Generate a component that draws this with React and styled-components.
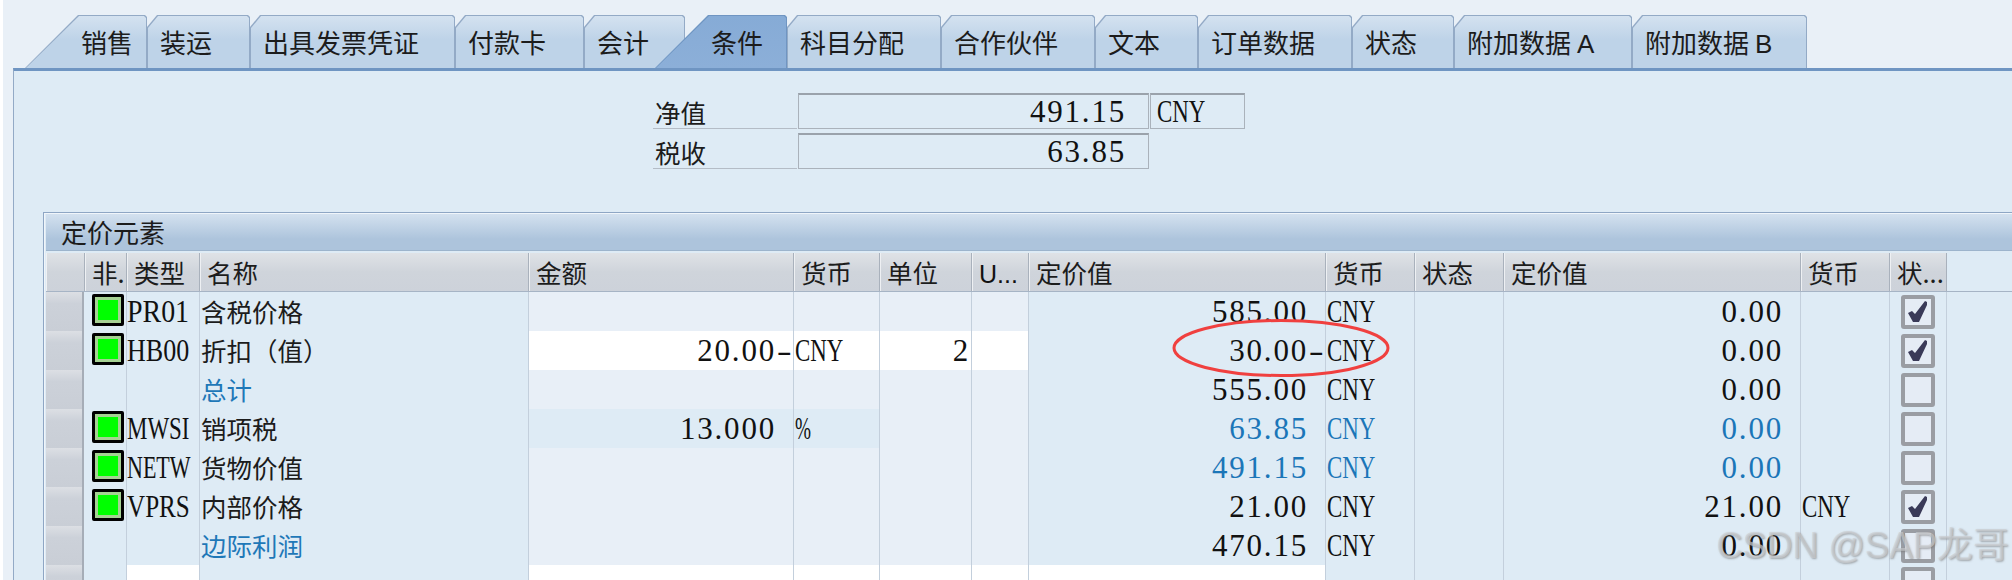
import styled, {createGlobalStyle} from "styled-components";

const GlobalStyle = createGlobalStyle`
  html, body {
    margin: 0;
    padding: 0;
    background: #fff;
  }
`

const CJK = `"Noto Sans CJK SC", "Liberation Sans", sans-serif`;

const Page = styled.div`
  position: relative;
  width: 2012px;
  height: 580px;
  overflow: hidden;
  padding-left: 3px;
  box-sizing: border-box;
  font-family: ${CJK};
  font-size: 25.5px;
  color: #1c1c1c;
`

const Sheet = styled.div`
  height: 100%;
  display: flex;
  flex-direction: column;
  background: #e9f0f7;
`

const TabStrip = styled.div`
  display: flex;
  height: 53px;
  margin-top: 15px;
  padding-left: 22px;
  flex: none;
`

const Tab = styled.div`
  position: relative;
  width: ${(p) => p.$w}px;
  margin-left: ${(p) => p.$overlap || 0}px;
  z-index: ${(p) => (p.$active ? 2 : 1)};
  display: flex;
  align-items: center;
  padding: 0 0 1px ${(p) => (p.$slant ? 56 : 13)}px;
  box-sizing: border-box;
  font-size: 26px;
  white-space: nowrap;
  background: ${(p) => (p.$active ? "#6f95c2" : "#93aac6")};
  clip-path: ${(p) => p.$slant
    ? "polygon(0 100%, 53px 0, calc(100% - 2px) 0, 100% 2px, 100% 100%)"
    : "polygon(0 12px, 10px 0, calc(100% - 2px) 0, 100% 2px, 100% 100%, 0 100%)"};

  &::before {
    content: "";
    position: absolute;
    inset: 1px 1px 0 1px;
    background: ${(p) => p.$active
      ? "linear-gradient(#86abd6, #8cafd8)"
      : "linear-gradient(#d4e2f0 0%, #bed3e8 45%, #bed3e8 100%)"};
    clip-path: inherit;
  }
`

const TabLabel = styled.span`
  position: relative;
  z-index: 1;
`

const TabLatin = styled.span`
  font-family: "Liberation Sans", sans-serif;
  margin-left: 6px;
`

const Panel = styled.div`
  flex: 1;
  margin-left: 10px;
  background: #deebf5;
  border-top: 3px solid #6f95c2;
  border-left: 1px solid #93aac6;
  padding-top: 22px;
`

const Summary = styled.div`
  display: flex;
  flex-direction: column;
  gap: 4px;
  margin-left: 639px;
`

const SummaryRow = styled.div`
  display: flex;
  gap: 1px;
  height: 36px;
`

const SummaryLabel = styled.div`
  width: 144px;
  box-sizing: border-box;
  border-bottom: 1px solid #b4bcc6;
  padding-left: 2px;
  line-height: 38px;
`

const SummaryBox = styled.div`
  width: ${(p) => p.$w}px;
  box-sizing: border-box;
  display: flex;
  align-items: center;
  justify-content: ${(p) => (p.$left ? "flex-start" : "flex-end")};
  padding: ${(p) => (p.$left ? "0 0 0 6px" : "0 22px 0 0")};
  border: 1px solid #aab2bb;
  border-top: 2px solid #9aa2ab;
`

const Group = styled.div`
  margin: 43px 0 0 29px;
  padding: 1px 0 0 2px;
  border-top: 1px solid #8ea6c4;
  border-left: 1px solid #8ea6c4;
  box-shadow: inset 1px 1px 0 #f0f5fa;
`

const GroupTitle = styled.div`
  height: 37px;
  padding-left: 15px;
  line-height: 36px;
  font-size: 26px;
  background: linear-gradient(#d3e1ef, #adc4dc 70%, #adc4dc);
  border-bottom: 1px solid #9db4cc;
  box-sizing: border-box;
`

const columns = "39px 42px 73px 329px 265px 86px 92px 57px 297px 89px 89px 297px 89px 57px";

const HeadRow = styled.div`
  display: grid;
  grid-template-columns: ${columns};
  height: 39px;
  margin-top: 2px;
  border-bottom: 1px solid #a6b4c5;
  box-sizing: border-box;
`

const HeadCell = styled.div`
  padding-left: 7px;
  line-height: 37px;
  white-space: nowrap;
  overflow: hidden;
  background: linear-gradient(#dfe2e6, #cfd4db 50%, #cdd2da);
  border-right: 1px solid #a9b1bc;
  box-shadow: inset 1px 0 0 #eef0f3;
`

const HeadLatin = styled.span`
  font-family: "Liberation Sans", sans-serif;
  font-size: 25px;
  color: #111;
`

const Row = styled.div`
  display: grid;
  grid-template-columns: ${columns};
  height: 39px;
`

const Selector = styled.div`
  background: linear-gradient(#dcdfe4, #ccd1d9 30%, #c9ced6);
  border-right: 2px solid #a6adb7;
  border-bottom: 1px solid #aab1bb;
  margin-right: 1px;
  box-sizing: border-box;
`

const tones = {
  base: "#deebf5",
  light: "#e8eff7",
  white: "#ffffff",
};

const Cell = styled.div`
  background: ${(p) => tones[p.$tone || "base"]};
  border-right: 1px solid #c3cfdc;
  border-bottom: 1px solid #b8c5d6;
  box-sizing: border-box;
  display: flex;
  align-items: center;
  justify-content: ${(p) => (p.$right ? "flex-end" : "flex-start")};
  padding: ${(p) => p.$pad || "0 0 0 1px"};
  white-space: nowrap;
  color: ${(p) => (p.$link ? "#1f78b8" : "#1c1c1c")};
`

const Num = styled.span`
  font-family: "Liberation Serif", serif;
  font-size: 31px;
  letter-spacing: 1.8px;
  color: ${(p) => (p.$blue ? "#1b76b8" : "#111")};
`

const Sign = styled.span`
  display: inline-block;
  width: 10px;
  margin: 0 3px;
  letter-spacing: 0;
  text-align: center;
  transform: scaleX(1.45);
`

const Latin = styled.span`
  display: inline-block;
  font-family: "Liberation Serif", serif;
  font-size: 31px;
  transform: scaleX(${(p) => p.$sx});
  transform-origin: left center;
  color: ${(p) => (p.$blue ? "#1b76b8" : "#111")};
`

const Lamp = styled.div`
  width: 32px;
  height: 32px;
  margin: -3px 0 0 7px;
  box-sizing: border-box;
  border: 3px solid #000;
  border-radius: 2px;
  background: #00ff00;
  box-shadow: inset 0 0 0 3px #a6d294;
`

const Check = styled.div`
  width: 34px;
  height: 34px;
  margin-left: 11px;
  box-sizing: border-box;
  border: 4px solid #9a9da3;
  border-radius: 3px;
  background: #e5ecf5;
  display: flex;
  align-items: center;
  justify-content: center;
`

const Ellipse = styled.svg`
  position: absolute;
  left: 1172px;
  top: 318px;
`

const Watermark = styled.div`
  position: absolute;
  right: 3px;
  top: 516px;
  font-family: "Liberation Sans", "Noto Sans CJK SC", sans-serif;
  font-size: 36px;
  white-space: nowrap;
  color: rgba(205, 207, 210, 0.65);
  text-shadow: 1px 1px 2px rgba(110, 110, 110, 0.55);
`

const tabs = [
  {label: "销售", w: 122, slant: true},
  {label: "装运", w: 103},
  {label: "出具发票凭证", w: 205},
  {label: "付款卡", w: 129},
  {label: "会计", w: 101},
  {label: "条件", w: 132, slant: true, active: true, overlap: -30},
  {label: "科目分配", w: 154},
  {label: "合作伙伴", w: 154},
  {label: "文本", w: 103},
  {label: "订单数据", w: 154},
  {label: "状态", w: 102},
  {label: "附加数据", latin: "A", w: 178},
  {label: "附加数据", latin: "B", w: 175},
];

const heads = ["", "非.", "类型", "名称", "金额", "货币", "单位", "U...", "定价值", "货币", "状态", "定价值", "货币", "状..."];

const rows = [
  {code: "PR01", sx: 0.9, name: "含税价格", value: "585.00", cur: true, value2: "0.00", checked: true},
  {code: "HB00", sx: 0.84, name: "折扣（值）", amount: "20.00", amountSign: "-", amountCur: "CNY", unit: "2", input: "white", value: "30.00", sign: "-", cur: true, value2: "0.00", checked: true},
  {name: "总计", link: true, value: "555.00", cur: true, value2: "0.00"},
  {code: "MWSI", sx: 0.74, name: "销项税", amount: "13.000", amountCur: "%", input: "base", value: "63.85", cur: true, blue: true, value2: "0.00"},
  {code: "NETW", sx: 0.71, name: "货物价值", value: "491.15", cur: true, blue: true, value2: "0.00"},
  {code: "VPRS", sx: 0.81, name: "内部价格", value: "21.00", cur: true, value2: "21.00", cur2: true, checked: true},
  {name: "边际利润", link: true, value: "470.15", cur: true, value2: "0.00"},
];

const Cny = ({blue}) => <Latin $sx={0.74} $blue={blue}>CNY</Latin>;

const Amount = ({value, sign, blue}) => (
  <Num $blue={blue}>{value}<Sign>{sign}</Sign></Num>
);

const CheckBox = ({checked}) => (
  <Check>
    {checked && (
      <svg width="26" height="26" viewBox="0 0 26 26">
        <path d="M3 14 L7 12 L10 15 L20 2 L22 3 L22 6 L14 23 L8 23 Z" fill="#3a3a58" />
      </svg>
    )}
  </Check>
);

const PriceRow = ({row}) => {
  const input = row.input || "light";
  const amountSign = row.amountSign;
  return (
    <Row>
      <Selector />
      <Cell $pad="0">{row.code && <Lamp />}</Cell>
      <Cell $pad="0">{row.code && <Latin $sx={row.sx}>{row.code}</Latin>}</Cell>
      <Cell $link={row.link} $pad="0 0 2px 1px">{row.name}</Cell>
      <Cell $tone={input} $right $pad="0 1px 0 0">
        {row.amount && <Amount value={row.amount} sign={amountSign} />}
      </Cell>
      <Cell $tone={input}>
        {row.amountCur === "CNY" && <Cny />}
        {row.amountCur === "%" && <Latin $sx={0.62}>%</Latin>}
      </Cell>
      <Cell $tone={row.input === "white" ? "white" : "light"} $right $pad="0 1px 0 0">
        {row.unit && <Num>{row.unit}</Num>}
      </Cell>
      <Cell $tone={row.input === "white" ? "white" : "light"} />
      <Cell $right $pad="0 1px 0 0">
        <Amount value={row.value} sign={row.sign} blue={row.blue} />
      </Cell>
      <Cell>{row.cur && <Cny blue={row.blue} />}</Cell>
      <Cell />
      <Cell $right $pad="0 1px 0 0">
        <Amount value={row.value2} blue={row.blue} />
      </Cell>
      <Cell>{row.cur2 && <Cny />}</Cell>
      <Cell $pad="0">
        <CheckBox checked={row.checked} />
      </Cell>
    </Row>
  );
};

const BlankRow = () => (
  <Row>
    <Selector />
    <Cell />
    <Cell $tone="white" />
    <Cell />
    <Cell $tone="white" />
    <Cell $tone="white" />
    <Cell $tone="white" />
    <Cell $tone="white" />
    <Cell $tone="white" />
    <Cell />
    <Cell />
    <Cell />
    <Cell />
    <Cell $pad="0"><CheckBox /></Cell>
  </Row>
);

const App = () => {
  return (
    <Page>
      <GlobalStyle />
      <Sheet>
        <TabStrip>
          {tabs.map((t, i) => (
            <Tab key={i} $w={t.w} $slant={t.slant} $active={t.active} $overlap={t.overlap}>
              <TabLabel>
                {t.label}
                {t.latin && <TabLatin>{t.latin}</TabLatin>}
              </TabLabel>
            </Tab>
          ))}
        </TabStrip>
        <Panel>
          <Summary>
            <SummaryRow>
              <SummaryLabel>净值</SummaryLabel>
              <SummaryBox $w={351}><Num>491.15</Num></SummaryBox>
              <SummaryBox $w={95} $left><Cny /></SummaryBox>
            </SummaryRow>
            <SummaryRow>
              <SummaryLabel>税收</SummaryLabel>
              <SummaryBox $w={351}><Num>63.85</Num></SummaryBox>
            </SummaryRow>
          </Summary>
          <Group>
            <GroupTitle>定价元素</GroupTitle>
            <HeadRow>
              {heads.map((h, i) => (
                <HeadCell key={i}>
                  {h === "U..." ? <HeadLatin>{h}</HeadLatin> : h}
                </HeadCell>
              ))}
            </HeadRow>
            {rows.map((r) => <PriceRow key={r.name} row={r} />)}
            <BlankRow />
          </Group>
        </Panel>
      </Sheet>
      <Ellipse width="220" height="62" viewBox="0 0 220 62">
        <ellipse cx="109" cy="30" rx="107" ry="27.5" fill="none" stroke="#f0403f" strokeWidth="3" />
      </Ellipse>
      <Watermark>CSDN @SAP龙哥</Watermark>
    </Page>
  )
}

export default App
